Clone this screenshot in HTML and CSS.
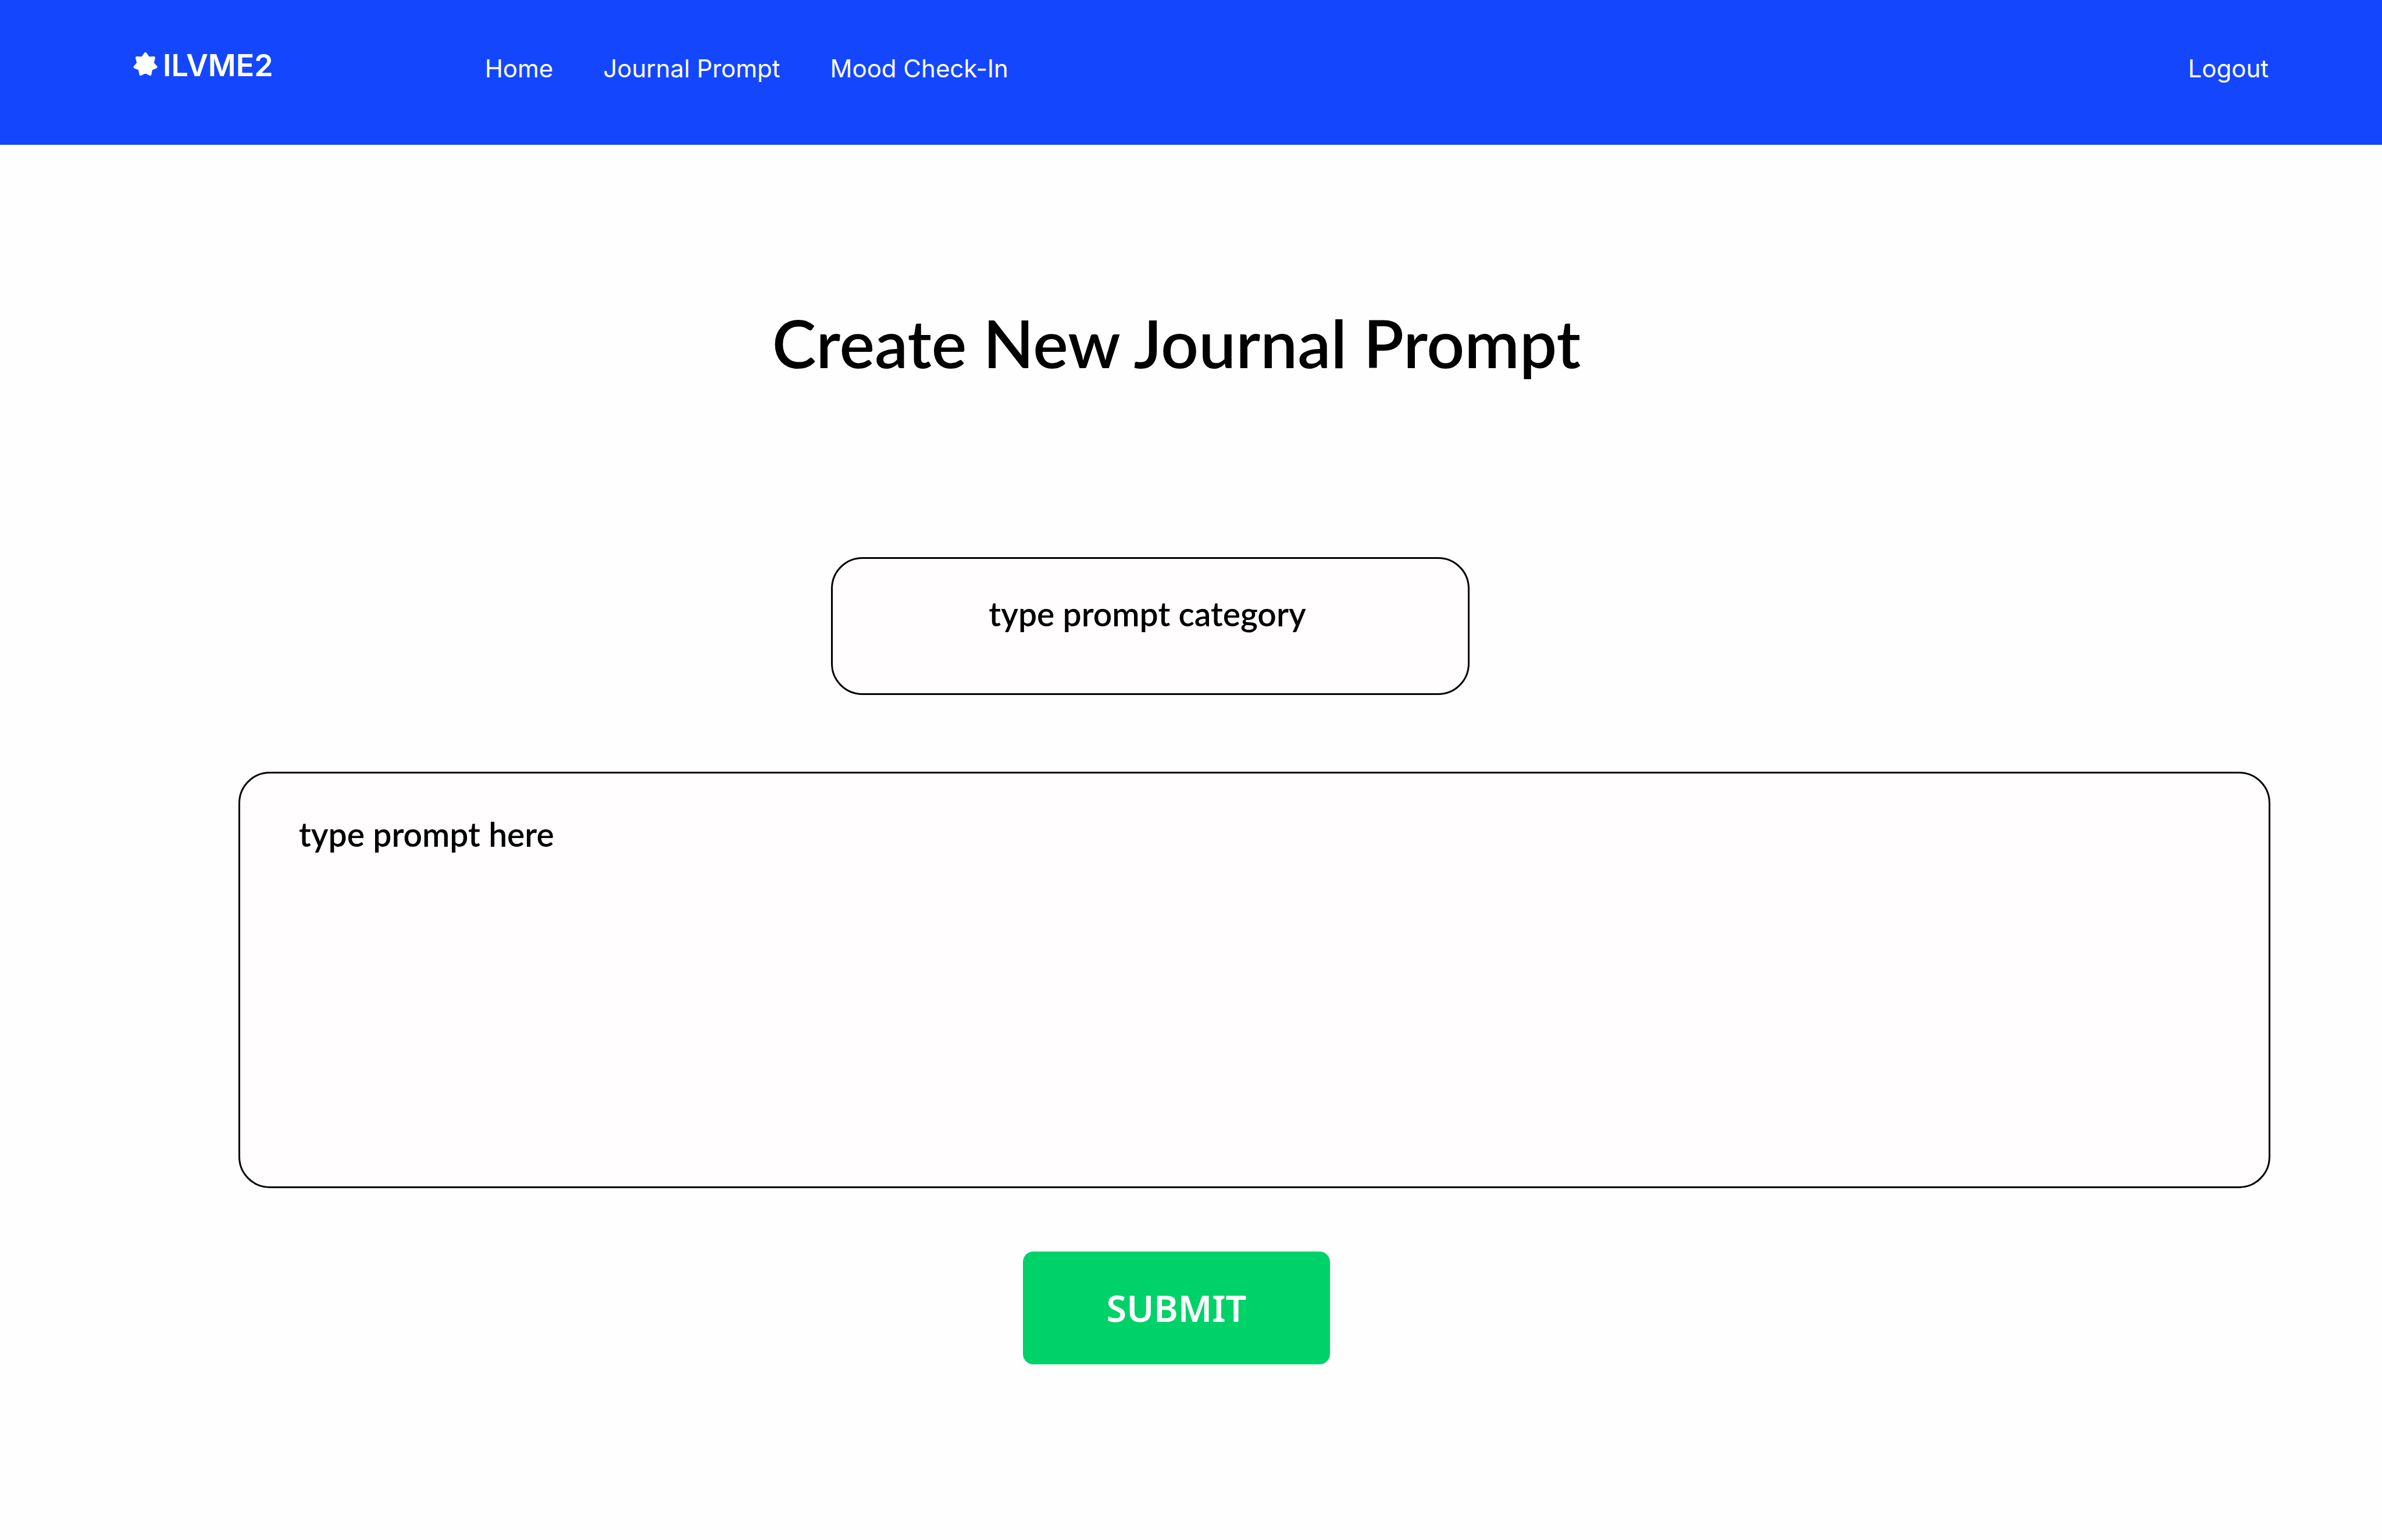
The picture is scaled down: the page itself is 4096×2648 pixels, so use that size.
FILE: index.html
```html
<!DOCTYPE html>
<html lang="en">
<head>
  <meta charset="utf-8">
  <meta name="viewport" content="width=device-width, initial-scale=1">
  <title>ILVME2</title>
  <link rel="stylesheet" href="styles.css">
</head>
<body>
  <header class="site-header">
    <a class="brand" href="#">
      <svg class="brand-mark" viewBox="0 0 42 46" aria-hidden="true">
        <path d="M21 2.6 26.3 9.9 35.4 9.5 33 18.3 38.9 25.1 30.6 28.7 29 37.6 21 33.3 13 37.6 11.4 28.7 3.1 25.1 9 18.3 6.6 9.5 15.7 9.9Z"/>
      </svg>
      <span>ILVME2</span>
    </a>
    <nav class="main-nav">
      <a href="#">Home</a>
      <a href="#">Journal Prompt</a>
      <a href="#">Mood Check-In</a>
    </nav>
    <a class="logout" href="#">Logout</a>
  </header>

  <main class="page">
    <h1 class="page-title">Create New Journal Prompt</h1>
    <form class="prompt-form">
      <input class="field category" type="text" aria-label="Prompt category" placeholder="type prompt category">
      <textarea class="field prompt" aria-label="Prompt" placeholder="type prompt here"></textarea>
      <button class="submit" type="submit">SUBMIT</button>
    </form>
  </main>
</body>
</html>
```
FILE: styles.css
```css
* {
  box-sizing: border-box;
}

body {
  margin: 0;
  background: #fefefe;
  color: #000;
  font-family: Lato, "Liberation Sans", sans-serif;
}

a {
  color: inherit;
  text-decoration: none;
}

/* Header */

.site-header {
  display: flex;
  align-items: flex-start;
  height: 249px;
  padding: 81px 195px 0 229px;
  background: #1447fd;
  color: #fff;
  font-family: Inter, "Liberation Sans", sans-serif;
  font-size: 42px;
  line-height: 73px;
}

.brand {
  display: flex;
  align-items: center;
  gap: 9px;
  font-size: 52px;
  font-weight: 600;
  line-height: 63px;
}

.brand-mark {
  width: 42px;
  height: 46px;
  fill: #fff;
  stroke: #fff;
  stroke-width: 5;
  stroke-linejoin: round;
}

.main-nav {
  display: flex;
  gap: 86px;
  margin-left: 364px;
}

.logout {
  margin-left: auto;
}

/* Prompt form */

.page {
  padding: 272px 192px 302px 142px;
}

.page-title {
  margin: 0 0 301px;
  font-size: 114px;
  font-weight: 600;
  line-height: 136px;
  text-align: center;
}

.prompt-form {
  display: flex;
  flex-direction: column;
  align-items: center;
}

.field {
  border: 3px solid #000;
  border-radius: 54px;
  outline: 0;
  background: #fffdfe;
  color: #000;
  font: 600 57px/68px Lato, "Liberation Sans", sans-serif;
}

.field::placeholder {
  color: #000;
  opacity: 1;
}

.category {
  width: 1098px;
  height: 237px;
  margin-right: 90px;
  padding: 0 10px 44px 0;
  text-align: center;
}

.prompt {
  align-self: stretch;
  height: 716px;
  margin: 132px 0 109px 268px;
  padding: 70px 101px;
  resize: none;
}

.submit {
  width: 528px;
  height: 194px;
  padding: 0;
  border: 0;
  border-radius: 18px;
  background: #00d26a;
  color: #fff;
  font: 600 63px/84px "Noto Sans", sans-serif;
}
```
